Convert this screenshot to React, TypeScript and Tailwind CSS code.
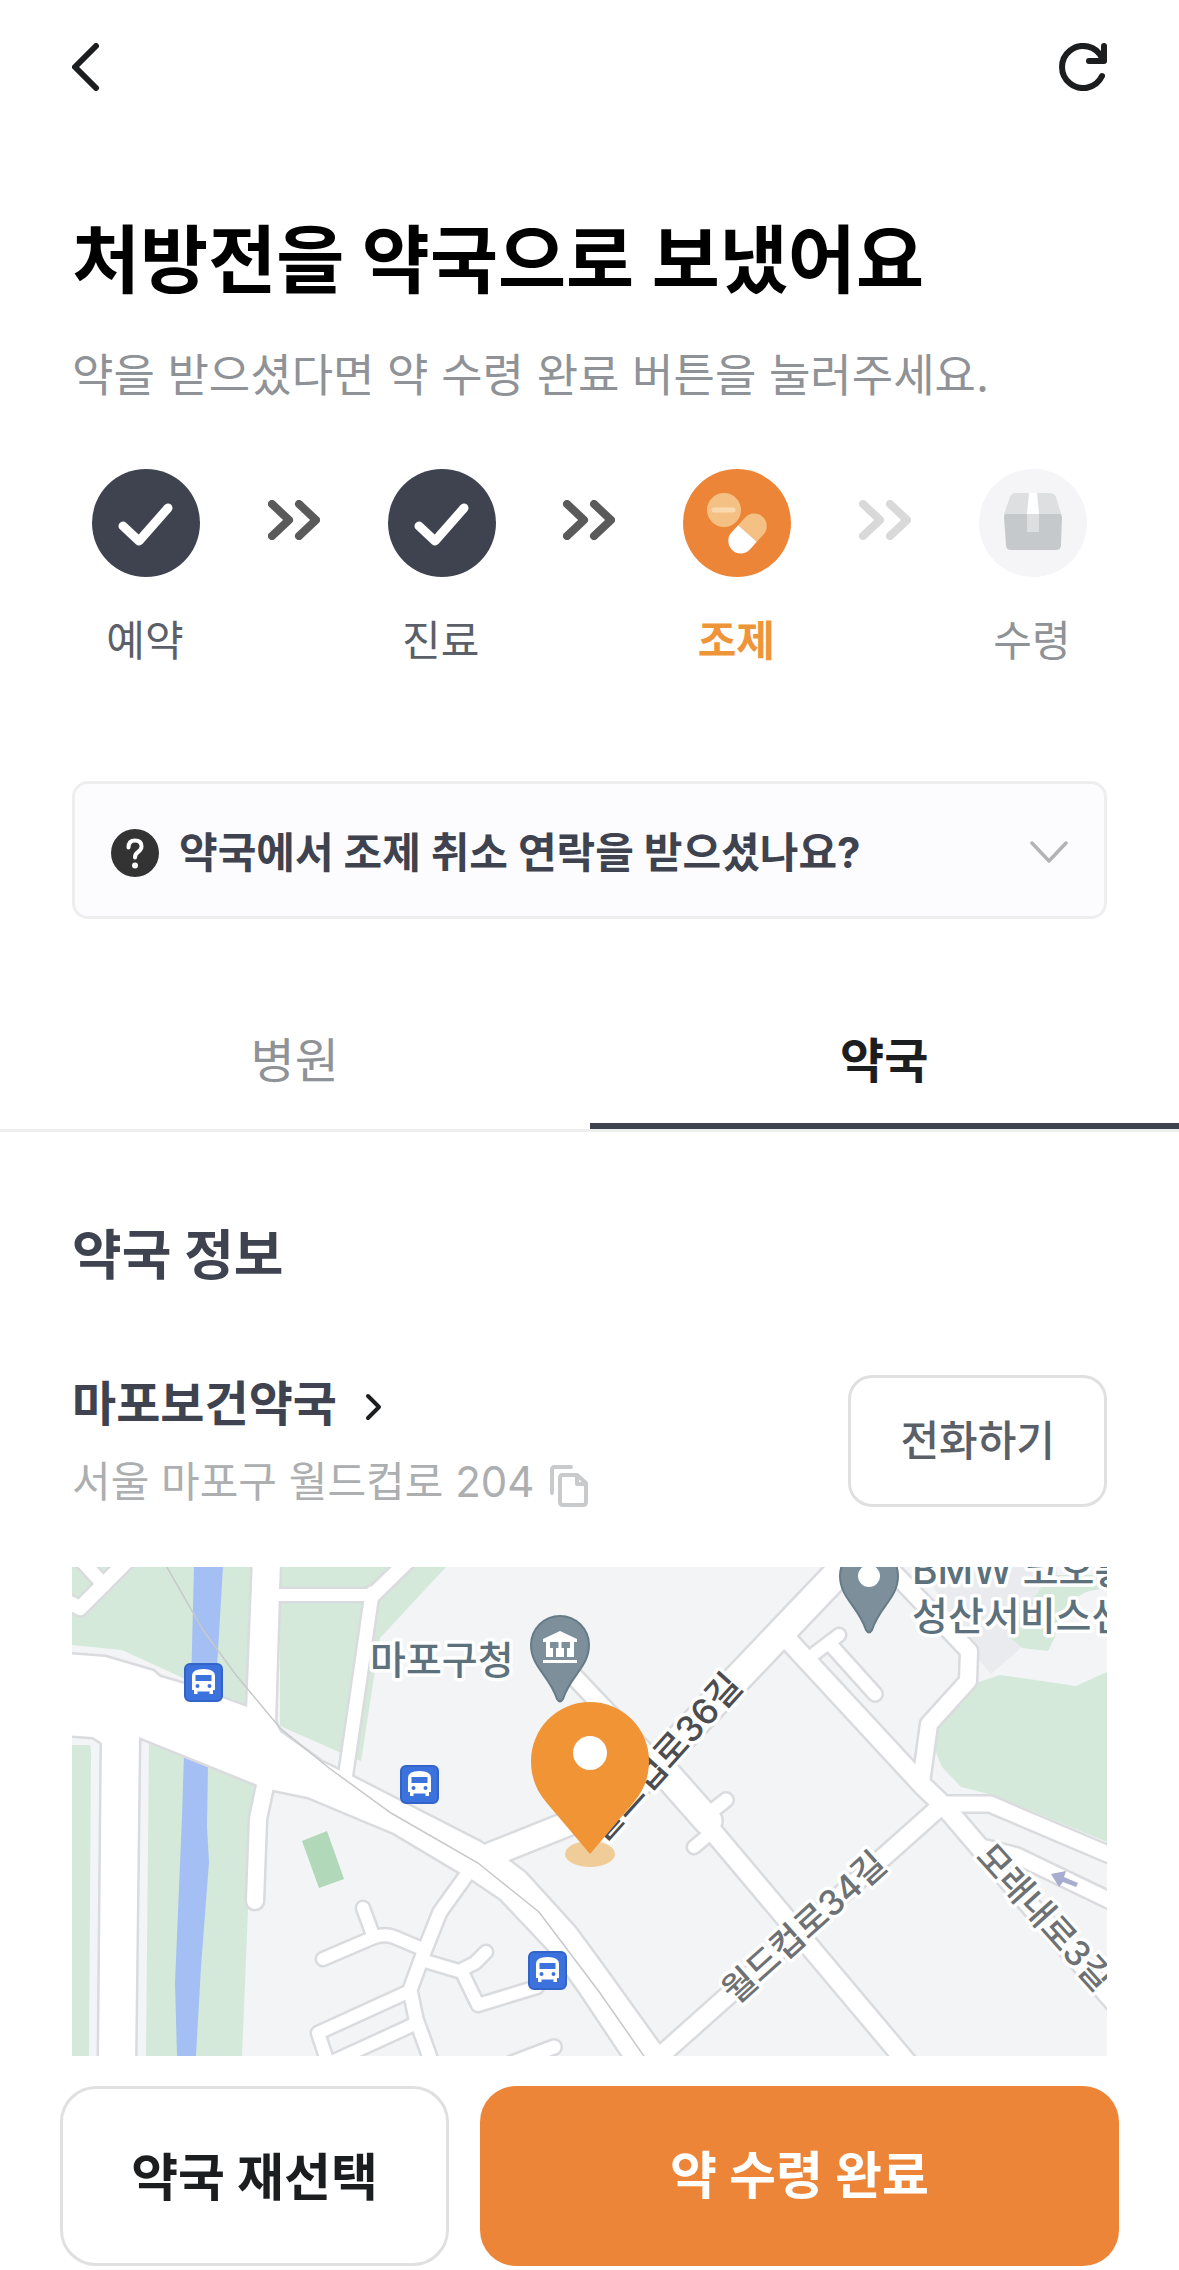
import { useState } from "react";

const minorRoads = [
  { d: "M-8 33 L8 41 L30 19 L58 -9", w: 14 },
  { d: "M8 -8 L32 18", w: 13 },
  { d: "M203 28 H300", w: 12 },
  { d: "M300 29 L338 -8", w: 14 },
  { d: "M300 26 L288 110 L273 212", w: 13 },
  { d: "M194 214 L186 252 L183 334", w: 16 },
  { d: "M396 306 L368 345 L352 385 L338 423 L344 452 L360 496", w: 13 },
  { d: "M353 383 L322 370 Q312 366 300 371 L251 392", w: 12 },
  { d: "M291 341 L301 368", w: 12 },
  { d: "M353 394 L390 405 L406 438 L465 420", w: 12 },
  { d: "M391 402 L403 396 L414 385", w: 12 },
  { d: "M338 424 L246 466 L256 496", w: 12 },
  { d: "M345 456 L262 494", w: 12 },
  { d: "M482 480 L440 496", w: 13 },
  { d: "M418 288 L498 256 L545 238", w: 23 },
  { d: "M785 -14 L666 111 L545 238", w: 27 },
  { d: "M496 103 L597 210", w: 16 },
  { d: "M590 202 L636 254", w: 27 },
  { d: "M632 254 L838 499", w: 18 },
  { d: "M635 248 L654 233", w: 13 },
  { d: "M640 265 L622 280", w: 12 },
  { d: "M716 73 L852 220 L873 240 L909 282 L1045 438", w: 18 },
  { d: "M742 87 L767 68", w: 12 },
  { d: "M758 77 L803 127", w: 13 },
  { d: "M800 -17 L897 84 L896 114 L857 157 L849 216 L873 240", w: 16 },
  { d: "M870 238 L578 498", w: 17 },
  { d: "M872 237 H918 L1045 291", w: 15 },
  { d: "M914 281 L945 289 L1045 337", w: 15 },
];

const wideRoads = [
  "-8,87 33,90 81,104 88,110 112,117 150,131 175,140 202,152 208,165 250,195 281,210 408,275 436,293 453,306 503,361 528,395 587,477 600,497 556,497 508,425 480,386 429,332 401,313 389,306 322,266 236,230 202,223 186,218 67,170 30,176 21,170 -8,168",
  "181,-8 208,-8 203,156 175,144",
  "30,170 67,168 63,497 27,497",
];

const busStops = [
  { x: 112, y: 96 },
  { x: 328, y: 198 },
  { x: 456, y: 384 },
];

const roadLabels = [
  { text: "월드컵로36길", x: 592, y: 190, angle: -48, size: 36, fill: "#4b4d50" },
  { text: "월드컵로34길", x: 732, y: 360, angle: -42, size: 35, fill: "#6e7174" },
  { text: "모래내로3길", x: 973, y: 350, angle: 48, size: 35, fill: "#6e7174" },
];

function BusStop({ x, y }: { x: number; y: number }) {
  return (
    <g transform={`translate(${x} ${y})`}>
      <rect x="1" y="1" width="37" height="37" rx="5" fill="#3b72de" stroke="#3264c8" strokeWidth="2" />
      <path
        d="M8 13 Q8 6 19.500 6 Q31 6 31 13 V27 H29 V31 H25.500 V28.500 H13.500 V31 H10 V27 H8 Z"
        fill="#fff"
      />
      <rect x="11.500" y="12" width="16" height="6" fill="#3b72de" />
      <circle cx="13.500" cy="23" r="2" fill="#3b72de" />
      <circle cx="25.500" cy="23" r="2" fill="#3b72de" />
    </g>
  );
}

function PlacePin({ x, y, children }: { x: number; y: number; children: React.ReactNode }) {
  return (
    <g transform={`translate(${x} ${y})`}>
      <path
        d="M0 -29 A29 29 0 0 1 29 0 C29 22 10 31 3 54 Q0 59 -3 54 C-10 31 -29 22 -29 0 A29 29 0 0 1 0 -29 Z"
        fill="#7d8f9b"
        stroke="#667b86"
        strokeWidth="2"
      />
      {children}
    </g>
  );
}

function PharmacyMap() {
  return (
    <svg
      viewBox="0 0 1035 489"
      preserveAspectRatio="xMidYMid slice"
      role="img"
      aria-label="마포보건약국 지도"
      className="block h-[489px] w-full overflow-hidden"
    >
      <rect width="1035" height="489" fill="#f2f4f6" />
      <g fill="#d4e9da">
        <path d="M0 0 H181 L175 140 L150 131 L109 110 L50 83 L0 78 Z" />
        <path d="M208 0 H374 L308 71 L289 194 L267 185 L208 159 Z" />
        <path d="M0 178 H18 L19 183 L17 489 H0 Z" />
        <path d="M77 174 L186 218 L176 343 L170 489 H74 Z" />
      </g>
      <path d="M850 0 H985 V40 L950 80 L919 107 L900 85 Z" fill="#e9ebee" />
      <g fill="#d4e9da">
        <path d="M978 8 H1035 V22 Q1012 22 1004 32 Q985 50 983 70 L976 84 L950 81 L936 68 Z" />
        <path d="M904 116 L928 108 L1004 119 L1035 105 V275 L921 228 L889 220 L870 200 L863 183 L866 160 Z" />
      </g>
      <g fill="#a4bff4">
        <path d="M122 0 H151 L145 100 L148 130 L119 120 Z" />
        <path d="M112 186 L136 196 L135 260 L137 295 L129 400 L124 489 H105 L103 416 L110 250 Z" />
      </g>
      <path d="M230 274 L255 264 L272 312 L247 321 Z" fill="#b1d8b8" />

      <g fill="none" stroke="#dadbde" strokeLinecap="round" strokeLinejoin="round">
        {minorRoads.map((r) => (
          <path key={r.d} d={r.d} strokeWidth={r.w + 5} />
        ))}
        {wideRoads.map((p) => (
          <polygon key={p} points={p} strokeWidth="5" />
        ))}
      </g>
      <g fill="none" stroke="#fff" strokeLinecap="round" strokeLinejoin="round">
        {wideRoads.map((p) => (
          <polygon key={p} points={p} fill="#fff" stroke="none" />
        ))}
        {minorRoads.map((r) => (
          <path key={r.d} d={r.d} strokeWidth={r.w} />
        ))}
      </g>
      <path
        d="M92 -5 L131 63 L164 108 L208 161 L257 201 L319 246 L406 296 L467 345 L528 426 L574 492"
        fill="none"
        stroke="#c6c8ca"
        strokeWidth="1.500"
      />
      <path d="M979 307 L994 304 L992 310 L1006 316 L1004 320 L991 315 L987 320 Z" fill="#a7adce" />

      {busStops.map((b) => (
        <BusStop key={b.x} x={b.x} y={b.y} />
      ))}

      <g stroke="#fff" strokeWidth="7" strokeLinejoin="round" paintOrder="stroke">
        {roadLabels.map((l) => (
          <text
            key={l.text}
            transform={`translate(${l.x} ${l.y}) rotate(${l.angle})`}
            y={l.size * 0.36}
            textAnchor="middle"
            fontSize={l.size}
            fontWeight="500"
            fill={l.fill}
          >
            {l.text}
          </text>
        ))}
        <g fontSize="39" fontWeight="500" fill="#5c717c">
          <text x="298" y="107">마포구청</text>
          <text x="840" y="17">BMW 코오롱</text>
          <text x="840" y="63">성산서비스센터</text>
        </g>
      </g>

      <PlacePin x={488} y={78}>
        <path
          d="M0 -14 L17 -6 V-3 H14 V12 H-14 V-3 H-17 V-6 Z M-17 15 H17 V18 H-17 Z"
          fill="#fff"
        />
        <path
          d="M-10 -3 H-1.500 V3 H-4 V12 H-7 V3 H-10 Z M1.500 -3 H10 V3 H7 V12 H4 V3 H1.500 Z"
          fill="#7d8f9b"
        />
      </PlacePin>
      <PlacePin x={797} y={9}>
        <circle r="11" fill="#fff" />
      </PlacePin>

      <ellipse cx="518" cy="287" rx="25" ry="13" fill="#f0cc98" />
      <path
        d="M518 287 L474 235 C464 223 459 210 459 194 A59 59 0 0 1 577 194 C577 210 572 223 562 235 Z"
        fill="#f09436"
      />
      <circle cx="518" cy="186" r="17" fill="#fff" />
    </svg>
  );
}

function CheckIcon() {
  return (
    <svg viewBox="0 0 108 108" className="size-[108px]">
      <circle cx="54" cy="54" r="54" fill="#3e434f" />
      <path d="M31 57 L47 72 L76 39" fill="none" stroke="#fff" strokeWidth="9" strokeLinecap="round" strokeLinejoin="round" />
    </svg>
  );
}

function PillIcon() {
  return (
    <svg viewBox="0 0 108 108" className="size-[108px]">
      <circle cx="54" cy="54" r="54" fill="#ed8538" />
      <circle cx="41" cy="41" r="17" fill="#f5c083" />
      <path d="M31 41 H50" stroke="#fad9af" strokeWidth="5" strokeLinecap="round" />
      <g transform="translate(64.500 64.500) rotate(-48)">
        <path d="M0 -12.500 H10 A12.500 12.500 0 0 1 10 12.500 H0 Z" fill="#f5c083" />
        <path d="M0 -12.500 H-10 A12.500 12.500 0 0 0 -10 12.500 H0 Z" fill="#fff" />
      </g>
    </svg>
  );
}

function BoxIcon() {
  return (
    <svg viewBox="0 0 108 108" className="size-[108px]">
      <circle cx="54" cy="54" r="54" fill="#f5f5f8" />
      <path d="M36 24 H71 Q75 24 77 28 L82 45 V48 H25 V45 L31 28 Q33 24 36 24 Z" fill="#dddfe1" />
      <path d="M26 45 H82 L83 48 L82 76 Q82 81 77 81 H32 Q27 81 27 76 L25 48 Z" fill="#c6c9cb" />
      <path d="M50 24 H58 L60 45 H48 Z" fill="#fff" />
      <path d="M48 45 H60 V63 H48 Z" fill="#dddfe1" />
    </svg>
  );
}

function StepArrows({ color }: { color: string }) {
  return (
    <svg viewBox="0 0 52 40" className="mt-[31px] h-10 w-[52px]" aria-hidden="true">
      <path
        d="M4 4 L21 20 L4 36 M31 4 L48 20 L31 36"
        fill="none"
        stroke={color}
        strokeWidth="8"
        strokeLinecap="round"
        strokeLinejoin="round"
      />
    </svg>
  );
}

function Step({ label, className, children }: { label: string; className: string; children: React.ReactNode }) {
  return (
    <div className="flex w-[108px] flex-col items-center gap-9">
      {children}
      <span className={`-ml-0.5 text-[42px] leading-[56px] whitespace-nowrap ${className}`}>{label}</span>
    </div>
  );
}

export default function App() {
  const [tab, setTab] = useState("약국");

  return (
    <div className="min-h-screen bg-white font-['Inter','Noto_Sans_CJK_KR',sans-serif]">
      <header className="flex items-center justify-between px-[72px] pt-[43px]">
        <button type="button" aria-label="뒤로" className="block">
          <svg viewBox="0 0 30 48" className="h-12 w-[30px]">
            <path d="M24 3 L3 24 L24 45" fill="none" stroke="#1c1d1f" strokeWidth="6" strokeLinecap="round" strokeLinejoin="round" />
          </svg>
        </button>
        <button type="button" aria-label="새로고침" className="block">
          <svg viewBox="0 0 48 48" className="size-12">
            <path
              d="M43 33 A21 21 0 1 1 43 15 M45 3 V18 H30"
              fill="none"
              stroke="#1c1d1f"
              strokeWidth="6"
              strokeLinecap="round"
              strokeLinejoin="round"
            />
          </svg>
        </button>
      </header>

      <main>
        <section className="px-[72px] pt-[125px]">
          <h1 className="text-[74px] leading-[88px] font-bold text-black">처방전을 약국으로 보냈어요</h1>
          <p className="mt-11 text-[45px] leading-[56px] text-[#8f9296]">
            약을 받으셨다면 약 수령 완료 버튼을 눌러주세요.
          </p>

          <div className="mt-[65px] flex items-start justify-between px-5">
            <Step label="예약" className="text-[#5b5f68]">
              <CheckIcon />
            </Step>
            <StepArrows color="#5a5a5a" />
            <Step label="진료" className="text-[#5b5f68]">
              <CheckIcon />
            </Step>
            <StepArrows color="#5a5a5a" />
            <Step label="조제" className="font-bold text-[#ef9539]">
              <PillIcon />
            </Step>
            <StepArrows color="#d9d9d9" />
            <Step label="수령" className="text-[#8f9296]">
              <BoxIcon />
            </Step>
          </div>

          <button
            type="button"
            aria-expanded="false"
            className="mt-28 flex h-[138px] w-full items-center rounded-2xl border-3 border-[#eeeeef] bg-[#fcfcfe] px-9 pt-1.5 text-left"
          >
            <svg viewBox="0 0 48 48" className="size-12" aria-hidden="true">
              <circle cx="24" cy="24" r="24" fill="#333" />
              <path d="M17.500 18.500 Q17.500 11.500 24 11.500 Q30.500 11.500 30.500 17.500 Q30.500 20.500 27 23 Q24 25 24 28.500" fill="none" stroke="#fff" strokeWidth="4" strokeLinecap="round" />
              <circle cx="24" cy="36.500" r="3" fill="#fff" />
            </svg>
            <span className="ml-5 flex-1 text-[42px] leading-[56px] font-bold text-[#3e434f]">
              약국에서 조제 취소 연락을 받으셨나요?
            </span>
            <svg viewBox="0 0 38 24" className="h-6 w-[38px]" aria-hidden="true">
              <path d="M2 2 L19 20 L36 2" fill="none" stroke="#b3b3b3" strokeWidth="3.500" strokeLinecap="round" strokeLinejoin="round" />
            </svg>
          </button>
        </section>

        <div role="tablist" className="mt-[110px] flex border-b-3 border-[#eeeeef]">
          {["병원", "약국"].map((name) => (
            <button
              key={name}
              type="button"
              role="tab"
              aria-selected={tab === name}
              onClick={() => setTab(name)}
              className={`flex-1 border-b-6 pb-[30px] text-[48px] leading-[64px] ${
                tab === name ? "border-[#3e434f] font-bold text-[#1c1d1f]" : "border-transparent text-[#8f9296]"
              }`}
            >
              {name}
            </button>
          ))}
        </div>

        <section className="px-[72px] pt-[88px]">
          <h2 className="text-[54px] leading-[72px] font-bold text-[#3e434f]">약국 정보</h2>

          <div className="mt-20 flex items-center justify-between">
            <div>
              <a href="#pharmacy" className="flex items-center text-[48px] leading-[64px] font-bold text-[#3e434f]">
                마포보건약국
                <svg viewBox="0 0 18 28" className="mt-1.5 ml-7 h-7 w-[18px]" aria-hidden="true">
                  <path d="M3 3 L14 14 L3 25" fill="none" stroke="#1c1d1f" strokeWidth="4" strokeLinecap="round" strokeLinejoin="round" />
                </svg>
              </a>
              <div className="mt-[18px] flex items-center gap-4">
                <span className="text-[42px] leading-[56px] text-[#acaeb0]">서울 마포구 월드컵로 204</span>
                <button type="button" aria-label="주소 복사" className="block">
                  <svg viewBox="0 0 38 42" className="mt-2 h-[42px] w-[38px]" fill="none" stroke="#c8cacc" strokeWidth="4" strokeLinecap="round" strokeLinejoin="round">
                    <path d="M2 28 V5 Q2 2 5 2 H21" />
                    <path d="M13 10 H27 L36 18 V37 Q36 40 33 40 H13 Q10 40 10 37 V13 Q10 10 13 10 Z" />
                    <path d="M27 11 V19 H35" />
                  </svg>
                </button>
              </div>
            </div>
            <button
              type="button"
              className="h-[132px] rounded-3xl border-3 border-[#e0e0e1] px-[49px] text-[42px] leading-[56px] font-medium text-[#5b5f68]"
            >
              전화하기
            </button>
          </div>

          <div className="mt-[57px]">
            <PharmacyMap />
          </div>
        </section>
      </main>

      <footer className="grid grid-cols-[389fr_639fr] gap-[31px] px-[60px] pt-[30px] pb-1">
        <button
          type="button"
          className="h-[180px] rounded-[36px] border-3 border-[#e0e0e1] bg-white pt-1 text-[51px] leading-[64px] font-bold text-[#1c1d1f]"
        >
          약국 재선택
        </button>
        <button
          type="button"
          className="h-[180px] rounded-[36px] bg-[#ed8538] text-[51px] leading-[64px] font-bold text-white"
        >
          약 수령 완료
        </button>
      </footer>
    </div>
  );
}
